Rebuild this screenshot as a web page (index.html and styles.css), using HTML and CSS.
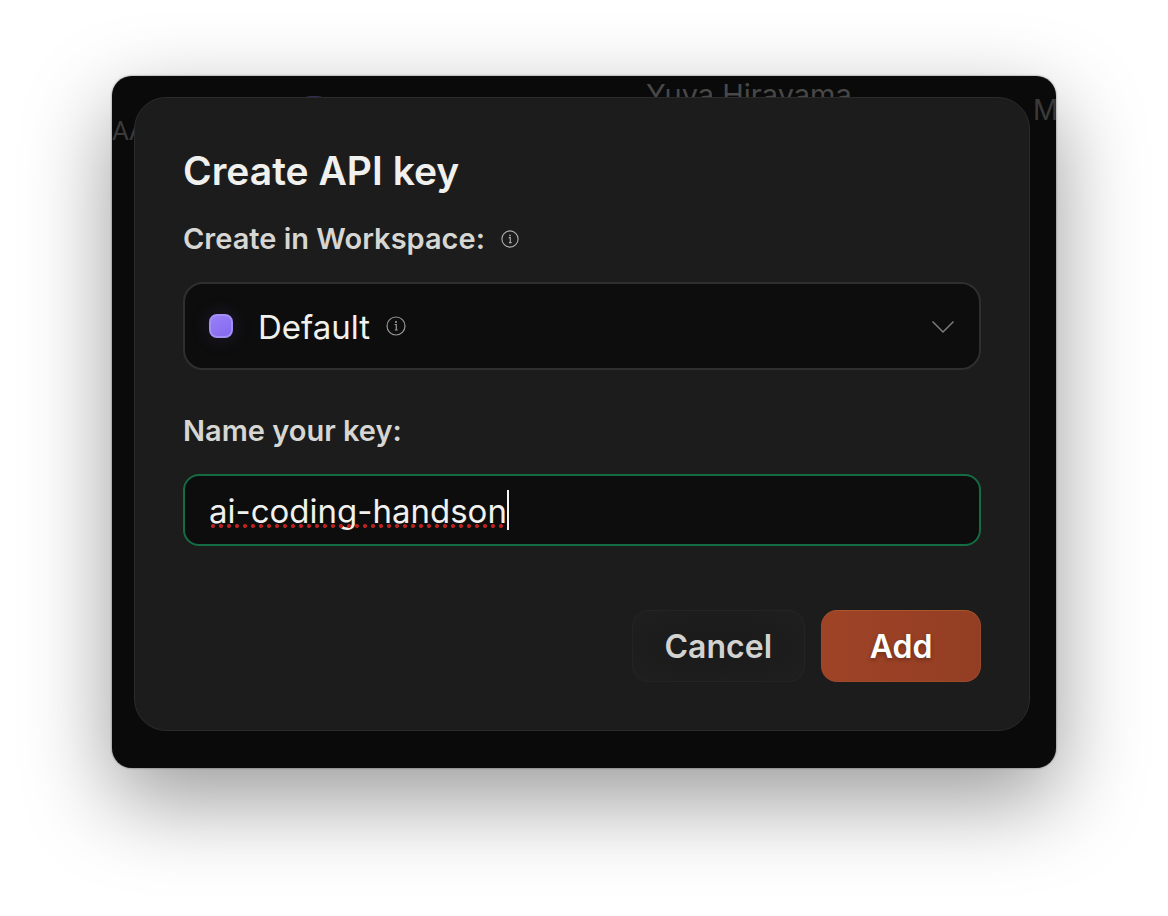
FILE: index.html
```html
<!DOCTYPE html>
<html lang="en">
<head>
<meta charset="utf-8">
<meta name="viewport" content="width=device-width, initial-scale=1">
<title>Create API key</title>
<link rel="stylesheet" href="styles.css">
</head>
<body>
<main class="window">
  <div class="backdrop" aria-hidden="true">
    <span class="backdrop-key">AA</span>
    <span class="backdrop-swatch"></span>
    <span class="backdrop-owner">Yuya Hirayama</span>
    <span class="backdrop-date">M</span>
  </div>

  <form class="modal" role="dialog" aria-labelledby="modal-title">
    <h1 class="modal-title" id="modal-title">Create API key</h1>

    <div class="label-row">
      <label class="label" for="workspace">Create in Workspace:</label>
      <svg class="info info-small" viewBox="0 0 20 20" aria-hidden="true">
        <circle cx="10" cy="10" r="9"/>
        <path d="M8.600 8.500h1.700v5.500M8.800 14h3"/>
        <circle class="info-dot" cx="10" cy="6" r="1"/>
      </svg>
    </div>
    <div class="field field-select">
      <span class="swatch"></span>
      <select class="select" id="workspace">
        <option>Default</option>
      </select>
      <svg class="info" viewBox="0 0 20 20" aria-hidden="true">
        <circle cx="10" cy="10" r="9"/>
        <path d="M8.600 8.500h1.700v5.500M8.800 14h3"/>
        <circle class="info-dot" cx="10" cy="6" r="1"/>
      </svg>
      <svg class="chevron" viewBox="0 0 24 24" aria-hidden="true">
        <path d="M1.500 7.500 12 18 22.500 7.500"/>
      </svg>
    </div>

    <div class="label-row label-row-next">
      <label class="label" for="key-name">Name your key:</label>
    </div>
    <div class="field field-input">
      <span class="typed">
        <input class="input" id="key-name" type="text" value="ai-coding-handson" spellcheck="false" autocomplete="off">
      </span>
      <span class="caret"></span>
    </div>

    <div class="actions">
      <button class="button button-cancel" type="button">Cancel</button>
      <button class="button button-add" type="submit">Add</button>
    </div>
  </form>
</main>
</body>
</html>
```
FILE: styles.css
```css
* {
  box-sizing: border-box;
}

body {
  margin: 0;
  padding: 76px 112px 148px;
  background: #fff;
  font-family: Inter, "Liberation Sans", sans-serif;
}

.window {
  position: relative;
  padding: 21px 26px 37px 22px;
  border-radius: 20px;
  background: #0a0a0a;
  box-shadow: 0 0 2px rgba(0, 0, 0, 0.6), 0 32px 88px rgba(0, 0, 0, 0.4);
}

/* Table row of the page behind the dialog */
.backdrop {
  position: absolute;
  inset: 0;
  overflow: hidden;
  border-radius: inherit;
  display: grid;
  grid-template-columns: 190px 344px 387px 1fr;
  align-items: start;
  color: #3a3a3a;
  font-size: 29px;
  line-height: 32px;
}

.backdrop-key {
  padding-top: 39px;
  font-family: Roboto, sans-serif;
  font-size: 26px;
}

.backdrop-swatch {
  width: 24px;
  height: 24px;
  margin-top: 20px;
  border-radius: 8px;
  background: #322b55;
}

.backdrop-owner {
  padding-top: 3px;
  color: #484848;
}

.backdrop-date {
  padding-top: 18px;
  font-size: 28px;
}

.modal {
  position: relative;
  padding: 48px;
  border: 1px solid #2b2b2b;
  border-radius: 32px;
  background: #1c1c1c;
}

.modal-title {
  margin: 0 0 23px;
  color: #f0f0ee;
  font-size: 39px;
  font-weight: 600;
  line-height: 50px;
}

.label-row {
  display: flex;
  align-items: center;
  gap: 16px;
  margin-bottom: 23px;
}

.label-row-next {
  margin-top: 41px;
}

.label {
  color: #d6d6d3;
  font-size: 29px;
  font-weight: 600;
  line-height: 40px;
}

.info {
  width: 20px;
  height: 20px;
  fill: none;
  stroke: #969694;
  stroke-width: 1.2;
}

.info-small {
  width: 18px;
  height: 18px;
  stroke: #b0b0ae;
}

.info-dot {
  fill: #a0a09e;
  stroke: none;
}

.field {
  display: flex;
  align-items: center;
  padding: 0 24px;
  border: 2px solid #2f2f2f;
  background: #0d0d0d;
}

.field-select {
  height: 88px;
  border-radius: 20px;
}

.field-input {
  height: 72px;
  border-color: #146c43;
  border-radius: 16px;
}

.swatch {
  width: 24px;
  height: 24px;
  margin-right: 25px;
  border: 2px solid #a48ff8;
  border-radius: 8px;
  background: linear-gradient(150deg, #9a80f8, #8468ee);
  box-shadow: 0 0 20px rgba(140, 112, 250, 0.16);
}

.select,
.input {
  field-sizing: content;
  margin: 0;
  padding: 2px 0 0;
  border: 0;
  outline: 0;
  background: transparent;
  color: #f0f0ee;
  font-family: inherit;
  font-size: 33px;
  line-height: 40px;
}

.select {
  appearance: none;
  margin-right: 16px;
}

.chevron {
  width: 24px;
  height: 24px;
  margin-left: auto;
  fill: none;
  stroke: #7c7c7a;
  stroke-width: 1.5;
}

.typed {
  position: relative;
  display: flex;
}

/* Spelling mark under the typed name */
.typed::after {
  content: "";
  position: absolute;
  right: 0;
  bottom: 3px;
  left: 0;
  height: 4px;
  background: radial-gradient(circle at center, #b9211f 0 1.8px, transparent 2.3px) 0 0 / 8px 4px repeat-x;
  pointer-events: none;
}

.caret {
  width: 2px;
  height: 40px;
  background: #f5f5f3;
}

.actions {
  display: flex;
  justify-content: flex-end;
  gap: 16px;
  margin-top: 64px;
}

.button {
  height: 72px;
  padding: 0 32px;
  border: 1px solid #242424;
  border-radius: 16px;
  font-family: inherit;
  font-size: 32px;
  font-weight: 600;
}

.button-cancel {
  min-width: 173px;
  background: radial-gradient(ellipse at center, #1b1b1b 30%, #1f1f1f);
  color: #d2d2d0;
}

.button-add {
  min-width: 160px;
  border-color: #9c4a2a;
  border-top-color: #ac5528;
  background: linear-gradient(90deg, #9f4326, #933e24);
  color: #fff;
  text-shadow: 0 2px 4px rgba(0, 0, 0, 0.3);
}
```
